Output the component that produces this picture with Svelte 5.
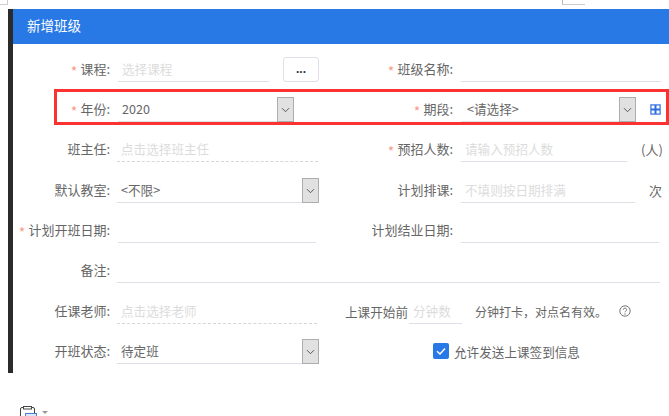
<script lang="ts">
  const chevron = 'M4.5 7 L8.5 11 L12.5 7';
</script>

<div class="page">
  <div class="top-strip">
    <span class="scrap-left"></span>
    <span class="scrap-right"></span>
  </div>

  <div class="window">
    <div class="side-strip"></div>
    <div class="modal">
      <header class="modal-head">新增班级</header>

      <div class="form">
        <!-- annotation drawn over the year / term row -->
        <div class="highlight"></div>

        <div class="row">
          <label class="lbl"><i>*</i>课程:</label>
          <div class="cell">
            <div class="input shift w151 ph">选择课程</div>
            <button class="pick">...</button>
          </div>
          <label class="lbl"><i>*</i>班级名称:</label>
          <div class="cell"><div class="input w200"></div></div>
        </div>

        <div class="row">
          <label class="lbl"><i>*</i>年份:</label>
          <div class="cell">
            <div class="input shift select w176">2020
              <span class="arrow"><svg viewBox="0 0 17 17"><path d={chevron} /></svg></span>
            </div>
          </div>
          <label class="lbl"><i>*</i>期段:</label>
          <div class="cell">
            <div class="input select term w175">&lt;请选择&gt;
              <span class="arrow"><svg viewBox="0 0 17 17"><path d={chevron} /></svg></span>
            </div>
            <svg class="grid-icon" viewBox="0 0 11 11">
              <rect x="0" y="0" width="11" height="11" fill="#b9c8f5" />
              <rect x="1" y="1" width="9" height="9" fill="#fff" stroke="#2b6fe0" />
              <path d="M5.5 1 V10 M1 5.5 H10" stroke="#2b6fe0" stroke-width="2" />
            </svg>
          </div>
        </div>

        <div class="row">
          <label class="lbl">班主任:</label>
          <div class="cell"><div class="input dashed w201 ph">点击选择班主任</div></div>
          <label class="lbl"><i>*</i>预招人数:</label>
          <div class="cell">
            <div class="input w166 ph">请输入预招人数</div>
            <span class="unit">(人)</span>
          </div>
        </div>

        <div class="row">
          <label class="lbl">默认教室:</label>
          <div class="cell">
            <div class="input select w202">&lt;不限&gt;
              <span class="arrow"><svg viewBox="0 0 17 17"><path d={chevron} /></svg></span>
            </div>
          </div>
          <label class="lbl">计划排课:</label>
          <div class="cell">
            <div class="input w174 ph">不填则按日期排满</div>
            <span class="unit">次</span>
          </div>
        </div>

        <div class="row">
          <label class="lbl"><i>*</i>计划开班日期:</label>
          <div class="cell"><div class="input shift w198"></div></div>
          <label class="lbl">计划结业日期:</label>
          <div class="cell"><div class="input w198"></div></div>
        </div>

        <div class="row wide">
          <label class="lbl">备注:</label>
          <div class="cell"><div class="input w543"></div></div>
        </div>

        <div class="row">
          <label class="lbl">任课老师:</label>
          <div class="cell"><div class="input dashed w200 ph">点击选择老师</div></div>
          <div class="checkin">
            <span>上课开始前</span>
            <div class="input w53 ph">分钟数</div>
            <span class="after">分钟打卡，对点名有效。</span>
            <svg class="help" viewBox="0 0 12 12">
              <circle cx="6" cy="6" r="5.2" fill="none" stroke="#777" />
              <path d="M4.4 4.7 A1.6 1.6 0 1 1 6.6 6.2 Q6 6.5 6 7.3" fill="none" stroke="#777" />
              <circle cx="6" cy="9" r="0.7" fill="#777" />
            </svg>
          </div>
        </div>

        <div class="row">
          <label class="lbl">开班状态:</label>
          <div class="cell">
            <div class="input select w202">待定班
              <span class="arrow"><svg viewBox="0 0 17 17"><path d={chevron} /></svg></span>
            </div>
          </div>
          <div class="allow">
            <span class="check">
              <svg viewBox="0 0 16 16"><path d="M4 8.2 L7 11 L12 5.5" /></svg>
            </span>
            允许发送上课签到信息
          </div>
        </div>
      </div>
    </div>
  </div>

  <div class="bottom-bar">
    <svg class="clip" viewBox="0 0 17 10">
      <path d="M0.5 10 V3 Q0.5 1.5 2 1.5 H13 Q14.5 1.5 14.5 3 V7" fill="none" stroke="#444" />
      <rect x="3.5" y="0.5" width="8" height="2.5" fill="#fff" stroke="#444" />
      <rect x="5.5" y="7.5" width="11" height="3" fill="#dce8f8" stroke="#4a7fd0" />
    </svg>
    <span class="caret"></span>
  </div>
</div>

<style>
  :global(body) {
    margin: 0;
    background: #fff;
  }

  .page {
    width: 669px;
    height: 416px;
    overflow: hidden;
    font-family: "Noto Sans CJK SC", "Liberation Sans", sans-serif;
    font-size: 13px;
    color: #666;
  }

  .top-strip {
    display: flex;
    align-items: flex-start;
    height: 9px;
  }

  .scrap-left {
    width: 8px;
    height: 5px;
    border-right: 1px solid #ccc;
    border-bottom: 1px solid #ccc;
    box-sizing: border-box;
  }

  .scrap-right {
    width: 23px;
    height: 5px;
    margin-left: 554px;
    border-left: 1px solid #bbb;
    border-bottom: 1px solid #ccc;
    box-sizing: border-box;
  }

  .window {
    display: flex;
    height: 364px;
    margin-left: 8px;
  }

  .side-strip {
    width: 5px;
    background: #2b2b2b;
  }

  .modal {
    flex: 1;
    background: #fff;
  }

  .modal-head {
    height: 35px;
    line-height: 33px;
    padding-left: 14px;
    background: #2879e6;
    color: #fff;
    font-size: 13.5px;
  }

  .form {
    position: relative;
    padding-top: 5px;
  }

  .highlight {
    position: absolute;
    left: 41px;
    top: 45px;
    width: 615px;
    height: 36px;
    box-sizing: border-box;
    border: 3px solid #fa3232;
    pointer-events: none;
  }

  .row {
    display: grid;
    grid-template-columns: 97px 209px 134px 1fr;
    height: 40.33px;
    align-items: center;
  }

  .row.wide {
    grid-template-columns: 97px 1fr;
  }

  .lbl {
    text-align: right;
    white-space: nowrap;
    line-height: 23px;
    height: 25px;
  }

  .lbl i {
    color: #f79a8a;
    font-style: normal;
    font-size: 14px;
    vertical-align: -3px;
    margin-right: 3px;
  }

  .cell {
    display: flex;
    align-items: center;
    padding-left: 8px;
  }

  .row .cell:nth-child(2) {
    padding-left: 7px;
  }

  .input {
    position: relative;
    box-sizing: border-box;
    height: 25px;
    line-height: 23px;
    padding-left: 4px;
    border-bottom: 1px solid #dfdfe8;
    font-size: 12.6px;
    white-space: nowrap;
    flex: none;
  }

  .shift {
    margin-left: 1px;
  }

  .term {
    padding-left: 6px;
  }

  .ph {
    color: #dcdcdc;
  }

  .dashed {
    border-bottom: 1px dashed #d5d5dc;
  }

  .select {
    color: #666;
  }

  .arrow {
    position: absolute;
    right: 0;
    top: 0;
    width: 17px;
    height: 25px;
    box-sizing: border-box;
    background: #e1e1e1;
    border: 1px solid #adadad;
    display: flex;
    align-items: center;
    justify-content: center;
  }

  .arrow svg {
    width: 15px;
    height: 15px;
  }

  .arrow path {
    fill: none;
    stroke: #444;
    stroke-width: 1;
  }

  .w53 { width: 53px; }
  .w151 { width: 151px; }
  .w166 { width: 166px; }
  .w174 { width: 174px; }
  .w175 { width: 175px; }
  .w176 { width: 176px; }
  .w198 { width: 198px; }
  .w200 { width: 200px; }
  .w201 { width: 201px; }
  .w202 { width: 202px; }
  .w543 { width: 543px; }

  .pick {
    width: 36px;
    height: 25px;
    margin-left: 14px;
    padding: 0;
    background: #fff;
    border: 1px solid #dfdfe8;
    border-radius: 3px;
    color: #333;
    font: 700 12px "Liberation Sans", sans-serif;
  }

  .grid-icon {
    width: 11px;
    height: 11px;
    margin-left: 14px;
  }

  .unit {
    margin-left: 14px;
    white-space: nowrap;
  }

  .checkin {
    grid-column: 3 / 5;
    display: flex;
    align-items: center;
    padding-left: 26px;
    font-size: 12.6px;
    white-space: nowrap;
  }

  .checkin .input {
    margin-left: 1px;
  }

  .after {
    margin-left: 13px;
    font-size: 12px;
  }

  .help {
    width: 12px;
    height: 12px;
    margin-left: 12px;
  }

  .allow {
    grid-column: 3 / 5;
    display: flex;
    align-items: center;
    padding-left: 114px;
    font-size: 12.6px;
    white-space: nowrap;
  }

  .check {
    width: 16px;
    height: 16px;
    margin-right: 5px;
    background: #2879e6;
    border-radius: 2px;
  }

  .check svg {
    display: block;
  }

  .check path {
    fill: none;
    stroke: #fff;
    stroke-width: 1.5;
  }

  .bottom-bar {
    display: flex;
    align-items: flex-end;
    height: 43px;
    padding-left: 20px;
  }

  .clip {
    width: 17px;
    height: 10px;
  }

  .caret {
    width: 0;
    height: 0;
    margin: 0 0 2px 5px;
    border-left: 3px solid transparent;
    border-right: 3px solid transparent;
    border-top: 3px solid #999;
  }
</style>
